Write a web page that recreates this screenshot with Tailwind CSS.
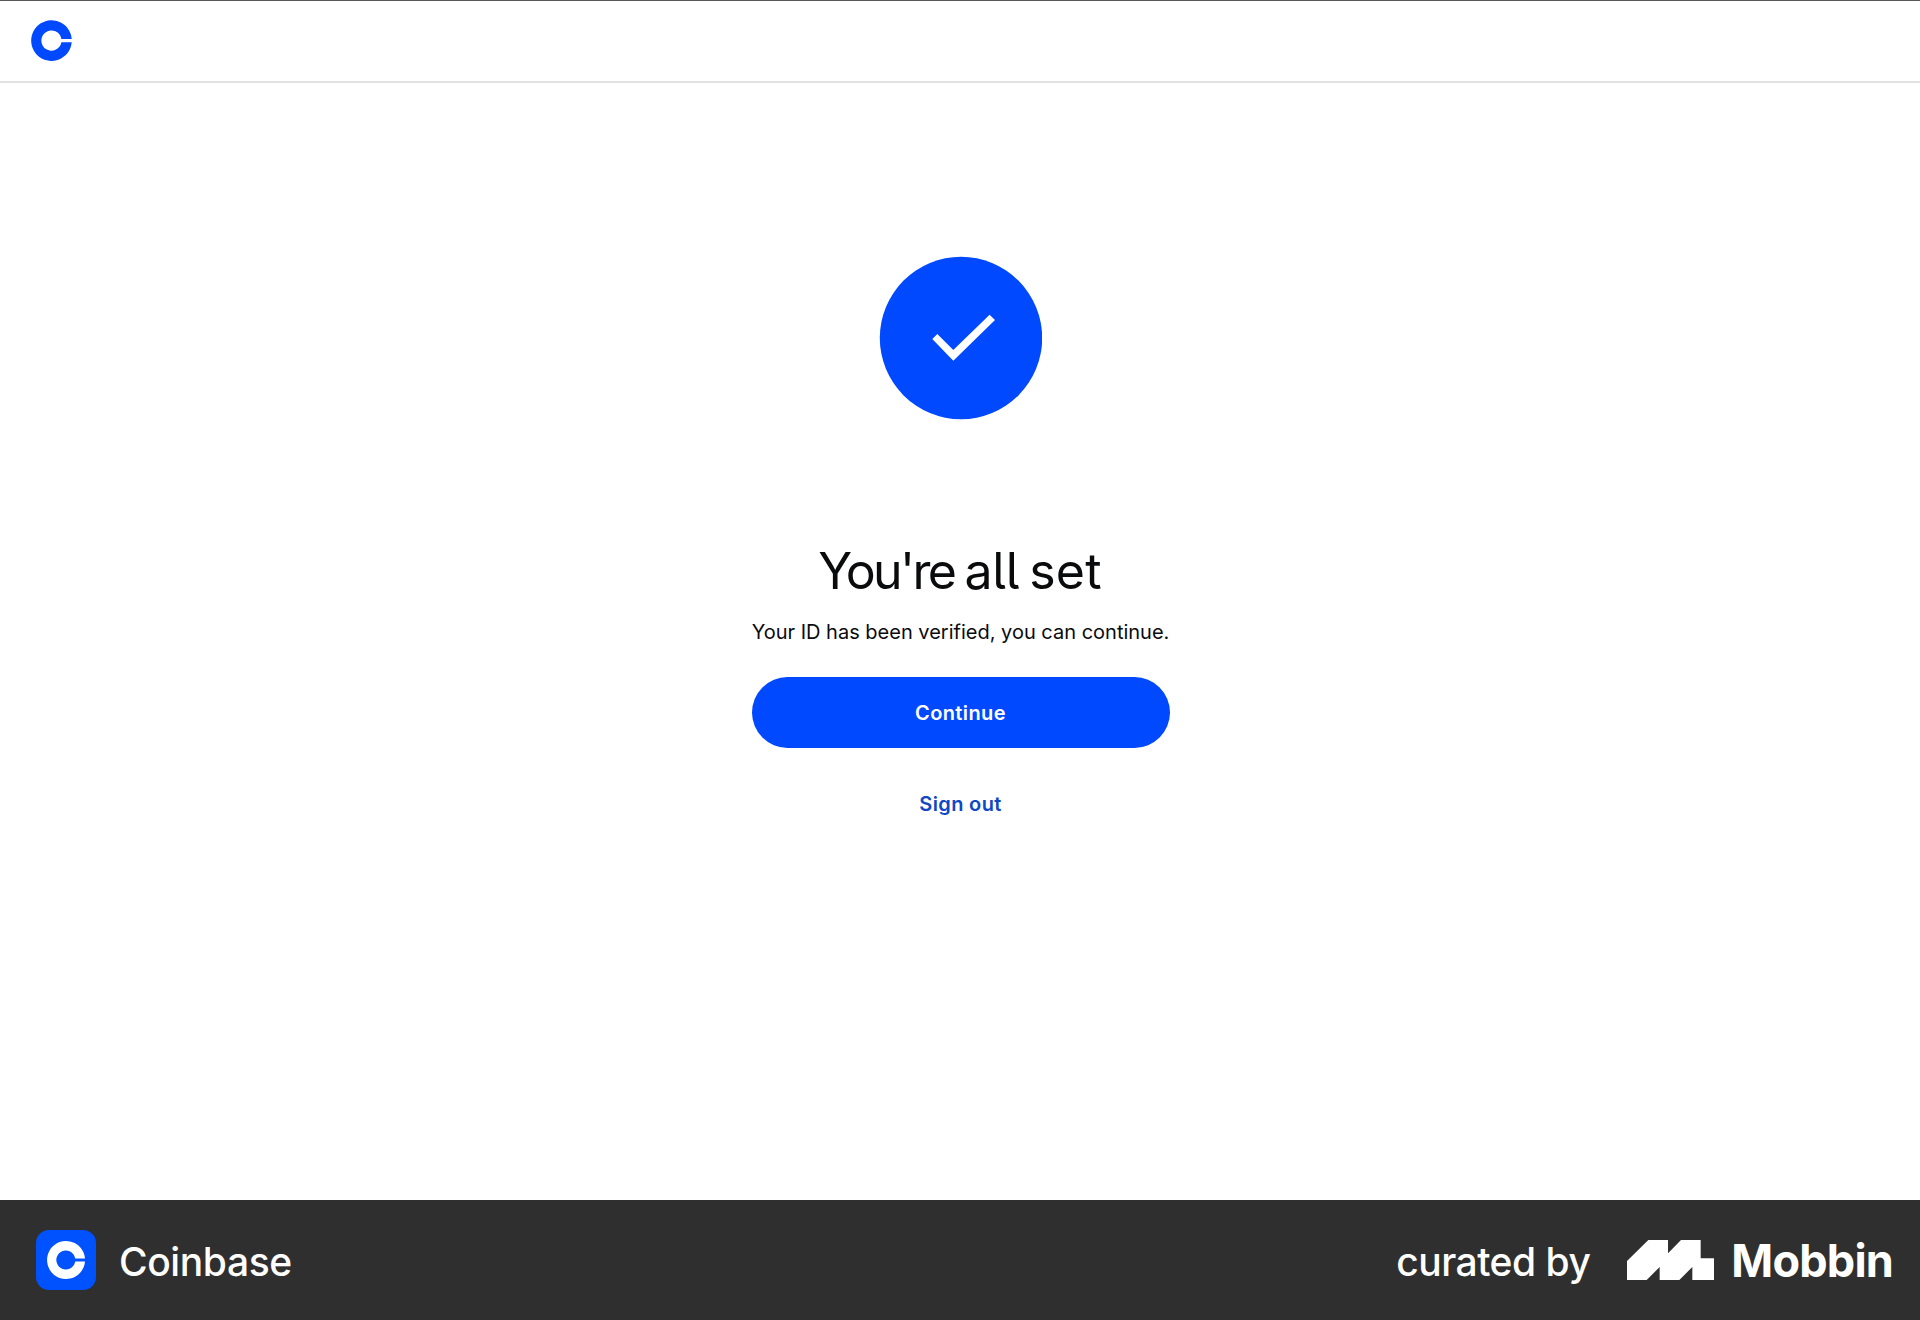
<!DOCTYPE html>
<html lang="en">
<head>
<meta charset="utf-8">
<title>Coinbase</title>
<script src="https://cdn.jsdelivr.net/npm/@tailwindcss/browser@4"></script>
</head>
<body class="flex h-[1320px] w-[1920px] flex-col overflow-hidden bg-white font-[Inter,sans-serif] text-[#0a0b0d]">
<header class="flex h-[83px] shrink-0 items-start border-t border-b-2 border-t-[#58585a] border-b-[#e2e2e3] pt-[19px] pl-[31px]">
  <svg class="h-[41px] w-[41px]" viewBox="0 0 41 41"><path fill="#0049ff" d="M40.7 18.9A20.3 20.3 0 1 0 40.7 22.3H30.4A10.1 10.1 0 1 1 30.4 18.9Z"/></svg>
</header>
<main class="flex flex-1 flex-col items-center pt-[173px]">
  <svg class="h-[164px] w-[163px]" viewBox="0 0 163 164"><circle cx="82" cy="82" r="81.2" fill="#0049ff"/><path fill="#fff" d="M53.3 83L58.3 78L74.3 94L110.6 58.7L116 64L74.3 104.7Z"/></svg>
  <h1 class="mt-[121px] text-[50px] leading-[60px] whitespace-nowrap [word-spacing:-4px]"><span class="tracking-[-2.6px]">You're</span> <span class="tracking-[-0.3px] [font-feature-settings:'cv05']">all</span> <span class="tracking-[0.2px]">set</span></h1>
  <p class="mt-[17px] ml-px text-[20px] leading-[28px] whitespace-nowrap [font-feature-settings:'cv05']">Your ID has been verified, you can continue.</p>
  <button class="mt-[31px] ml-px h-[71px] w-[418px] rounded-full bg-[#0049ff] text-[20px] font-semibold tracking-[0.4px] text-white"><span>Continue</span></button>
  <a class="mt-[42px] ml-px text-[20px] leading-[28px] font-semibold tracking-[0.35px] text-[#1048c4]"><span>Sign out</span></a>
</main>
<footer class="flex h-[120px] shrink-0 items-center justify-between bg-[#2f2f2f] pr-[27px] pl-[36px] text-white">
  <div class="flex items-center gap-[23px]">
    <svg class="h-[60px] w-[60px]" viewBox="0 0 60 60"><rect width="60" height="60" rx="13" fill="#0052ff"/><path fill="#fff" d="M49 28.5A19 19 0 1 0 49 31.5H39.2A9.5 9.5 0 1 1 39.2 28.5Z"/></svg>
    <span class="pt-[4px] text-[39px] leading-[48px] font-medium tracking-[-0.4px]">Coinbase</span>
  </div>
  <div class="flex items-center">
    <span class="pt-[4px] text-[39px] leading-[48px] font-medium tracking-[-0.5px] whitespace-nowrap">curated by</span>
    <svg class="mr-[17px] ml-[37px] h-[40px] w-[87px]" viewBox="0 0 261 120"><path fill="#fff" d="M0 63L64 0H123V40L162 0H221V55H261V120H196V81L157 120H98V81L59 120H0Z"/></svg>
    <span class="pt-[2px] text-[45px] leading-[54px] font-bold tracking-[-0.8px]">Mobbin</span>
  </div>
</footer>
</body>
</html>
